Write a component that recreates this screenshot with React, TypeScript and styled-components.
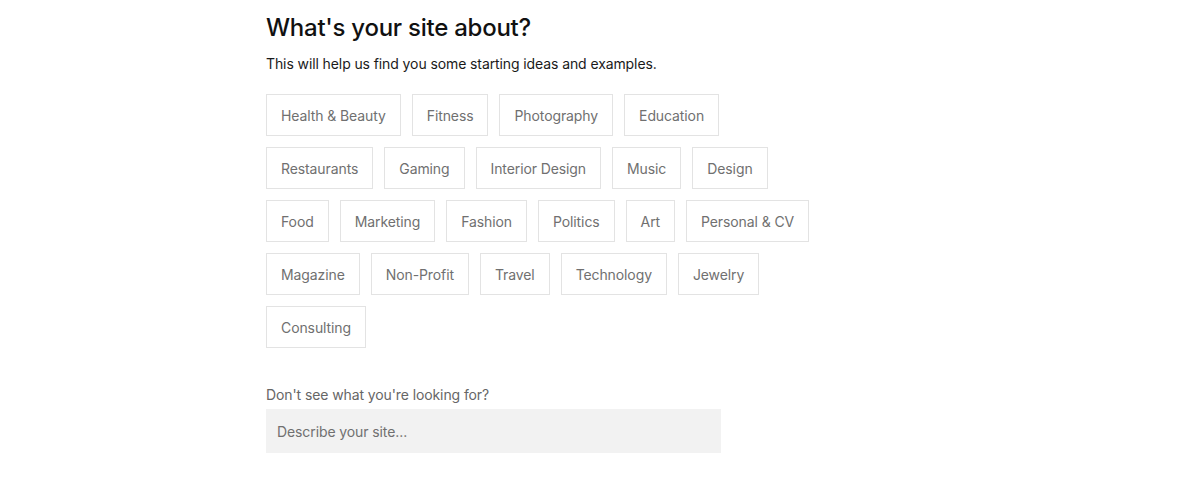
import * as React from 'react'
import styled, { createGlobalStyle } from 'styled-components'

// ______________________________________________________
//
// @ Data

const topics = [
  'Health & Beauty',
  'Fitness',
  'Photography',
  'Education',
  'Restaurants',
  'Gaming',
  'Interior Design',
  'Music',
  'Design',
  'Food',
  'Marketing',
  'Fashion',
  'Politics',
  'Art',
  'Personal & CV',
  'Magazine',
  'Non-Profit',
  'Travel',
  'Technology',
  'Jewelry',
  'Consulting',
]

// ______________________________________________________
//
// @ Styles

const GlobalStyle = createGlobalStyle`
  html, body {
    margin: 0;
    padding: 0;
    background: #fff;
    font-family: Inter, "Noto Sans", sans-serif;
  }
`

const Page = styled.div`
  width: 659px;
  margin: 0 auto;
  padding-top: 12px;
`

const Title = styled.h1`
  margin: 0;
  font-size: 24px;
  line-height: 32px;
  font-weight: 500;
  color: #111;
  letter-spacing: -0.25px;
`

const Subtitle = styled.p`
  margin: 10px 0 0;
  font-size: 14px;
  line-height: 20px;
  color: #1a1a1a;
  letter-spacing: -0.1px;
`

const ChipList = styled.div`
  display: flex;
  flex-wrap: wrap;
  gap: 11px;
  max-width: 560px;
  margin-top: 20px;
`

const Chip = styled.button`
  height: 42px;
  padding: 0 14px;
  border: 1px solid #e3e3e3;
  background: #fff;
  font-family: inherit;
  font-size: 14px;
  letter-spacing: -0.1px;
  color: #707070;
  cursor: pointer;
`

const Label = styled.label`
  display: block;
  margin-top: 37px;
  font-size: 14px;
  line-height: 20px;
  letter-spacing: -0.1px;
  color: #666;
`

const Input = styled.input`
  display: block;
  box-sizing: border-box;
  width: 455px;
  height: 44px;
  margin-top: 4px;
  padding: 0 11px;
  border: none;
  background: #f2f2f2;
  font-family: inherit;
  font-size: 14px;
  letter-spacing: -0.1px;
  color: #333;
  outline: none;
  &::placeholder {
    color: #707070;
  }
`

// ______________________________________________________
//
// @ View

const App: React.FC = () => (
  <>
    <GlobalStyle />
    <Page>
      <Title>What's your site about?</Title>
      <Subtitle>This will help us find you some starting ideas and examples.</Subtitle>
      <ChipList>
        {topics.map(t => (
          <Chip key={t}>{t}</Chip>
        ))}
      </ChipList>
      <Label htmlFor="describe">Don't see what you're looking for?</Label>
      <Input id="describe" placeholder="Describe your site..." />
    </Page>
  </>
)

export default App
